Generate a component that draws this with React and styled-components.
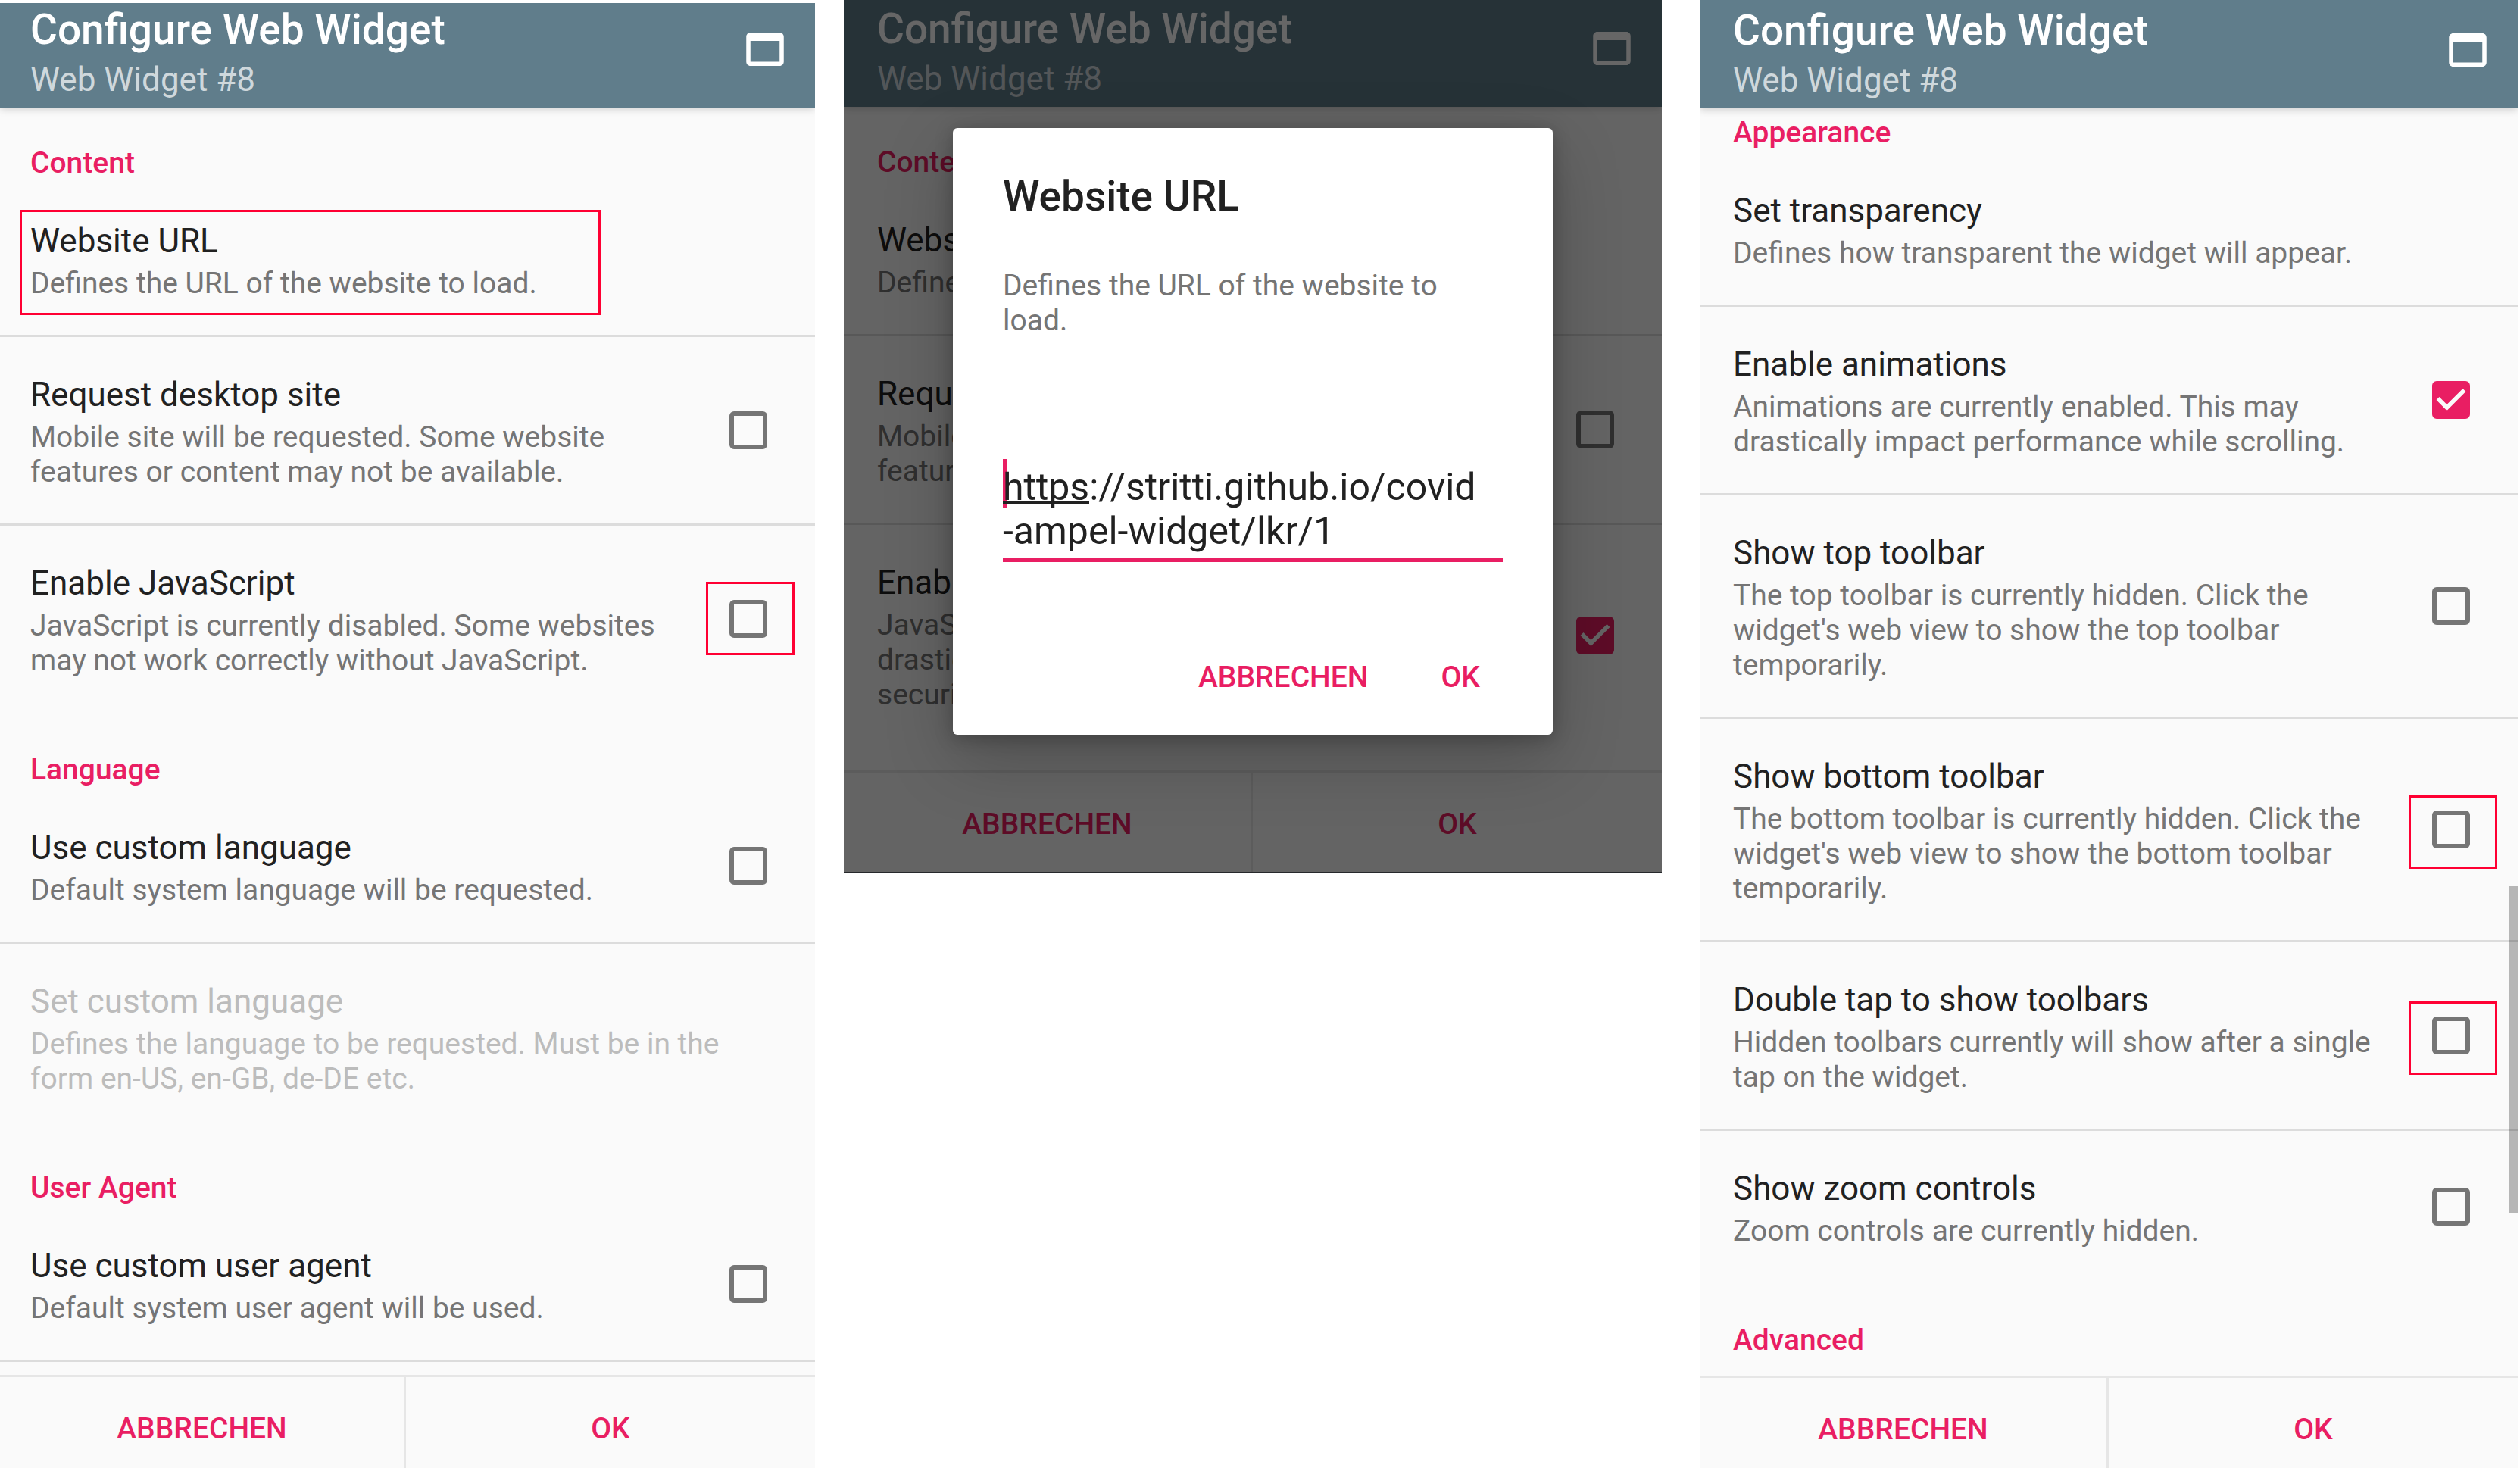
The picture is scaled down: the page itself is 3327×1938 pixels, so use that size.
import React, { useId } from "react";
import styled, { createGlobalStyle, css } from "styled-components";

const color = {
  bar: "#607d8b",
  accent: "#e91e63",
  surface: "#fafafa",
  text: "#212121",
  muted: "#757575",
  disabled: "#bcbcbc",
  divider: "#dcdcdc",
  footerLine: "#e6e6e6",
  marker: "#ff0033",
};

const GlobalStyle = createGlobalStyle`
  * { box-sizing: border-box; }
  body { margin: 0; background: #fff; }
  body, button, input, textarea { font-family: Roboto, "Liberation Sans", sans-serif; }
  h1, h2, p { margin: 0; }
`;

const Page = styled.main`
  display: flex;
  align-items: flex-start;
  height: 100vh;
  padding-right: 3px;
  overflow: hidden;
`;

const Panel = styled.section`
  position: relative;
  display: flex;
  flex-direction: column;
  flex: ${(p) => p.$grow || 1080} 1 0;
  min-width: 0;
  height: ${(p) => (p.$short ? "auto" : "calc(100vh - " + (p.$top || 0) + "px)")};
  margin-top: ${(p) => p.$top || 0}px;
  margin-left: ${(p) => p.$gap || 0}px;
  overflow: hidden;
  background: ${color.surface};
  --edge: ${(p) => p.$edge || 44}px;
`;

const Header = styled.header`
  position: relative;
  z-index: 1;
  display: flex;
  align-items: flex-end;
  justify-content: space-between;
  flex: none;
  height: ${(p) => p.$height}px;
  padding: 0 33px 11px var(--edge);
  background: ${color.bar};
  box-shadow: 0 2px 10px rgba(0, 0, 0, 0.18);
`;

const HeaderText = styled.div`
  display: flex;
  flex-direction: column;
  gap: 8px;
`;

const HeaderTitle = styled.h1`
  color: #fff;
  font-size: 55px;
  font-weight: 500;
  line-height: 64px;
`;

const HeaderSubtitle = styled.p`
  color: #cfd8dc;
  font-size: 44px;
  line-height: 52px;
`;

const HeaderButton = styled.button`
  display: block;
  width: 66px;
  height: 66px;
  margin-bottom: 33px;
  padding: 0;
  border: 0;
  background: none;
  color: #fff;

  svg { display: block; width: 100%; height: 100%; }
`;

const Scroller = styled.div`
  position: relative;
  flex: 1 1 auto;
  min-height: 0;
  padding-bottom: ${(p) => p.$tail || 0}px;
  overflow: hidden;
`;

const List = styled.div`
  margin-top: ${(p) => -(p.$scrolled || 0)}px;
`;

const ScrollThumb = styled.span`
  position: absolute;
  top: 61.4%;
  right: 0;
  width: 11px;
  height: 25.8%;
  background: rgba(0, 0, 0, 0.27);
`;

const Category = styled.h2`
  height: 100px;
  padding: 50px var(--edge) 4px;
  color: ${color.accent};
  font-size: 39px;
  font-weight: 500;
  line-height: 46px;
`;

const rowStyle = css`
  position: relative;
  display: flex;
  align-items: center;
  width: 100%;
  padding: 45px 63px 45px var(--edge);
  border: 0;
  border-bottom: 3px solid ${(p) => (p.$last ? "transparent" : color.divider)};
  border-radius: 0;
  background: none;
  text-align: left;
`;

const CheckRow = styled.label`
  ${rowStyle}
  gap: 48px;
`;

const ActionRow = styled.button`
  ${rowStyle}
  padding-right: 44px;

  &:disabled span { color: ${color.disabled}; }
`;

const RowText = styled.span`
  display: flex;
  flex: 1;
  flex-direction: column;
  gap: 7px;
  min-width: 0;
  padding-top: 5px;
`;

const RowTitle = styled.span`
  color: ${color.text};
  font-size: 44px;
  line-height: 52px;
`;

const RowSummary = styled.span`
  color: ${color.muted};
  font-size: 39px;
  line-height: 46px;
  white-space: pre-line;
`;

const RowMarker = styled.span`
  position: absolute;
  top: 35px;
  left: 26px;
  width: 767px;
  height: 139px;
  border: 3px solid ${color.marker};
`;

const CheckCell = styled.span`
  position: relative;
  flex: none;
  width: 50px;
  height: 50px;
`;

const CheckMarker = styled.span`
  position: absolute;
  inset: ${(p) => -p.$above}px -36px ${(p) => p.$above - 47}px -31px;
  border: 3px solid ${color.marker};
`;

const Box = styled.input`
  display: block;
  width: 50px;
  height: 50px;
  margin: 0;
  border: 6px solid ${color.muted};
  border-radius: 6px;
  appearance: none;

  &:checked {
    border-color: ${color.accent};
    background: ${color.accent};
  }
`;

const Tick = styled.svg`
  position: absolute;
  inset: 0;
  width: 50px;
  height: 50px;
  pointer-events: none;
`;

const Footer = styled.footer`
  display: grid;
  grid-template-columns: ${(p) => p.$split || "1fr 1fr"};
  flex: none;
  height: 136px;
  margin-bottom: ${(p) => -(p.$cut || 0)}px;
  border-top: 3px solid ${color.footerLine};
`;

const textButton = css`
  border: 0;
  background: none;
  color: ${color.accent};
  font-size: 39px;
  font-weight: 500;
  line-height: 46px;
`;

const FooterButton = styled.button`
  ${textButton}
  padding: 2px 0 0;

  &:first-child { border-right: 3px solid ${color.footerLine}; }
`;

const Scrim = styled.div`
  position: absolute;
  z-index: 2;
  inset: 0;
  display: flex;
  align-items: flex-start;
  justify-content: center;
  padding: 169px 144px 0;
  border-bottom: 2px solid #26282b;
  background: rgba(0, 0, 0, 0.6);
`;

const Dialog = styled.div`
  display: flex;
  flex-direction: column;
  width: 100%;
  padding: 58px 66px 40px;
  border-radius: 6px;
  background: #fff;
  box-shadow: 0 30px 90px rgba(0, 0, 0, 0.22), 0 4px 24px rgba(0, 0, 0, 0.24);
`;

const DialogTitle = styled.h2`
  color: ${color.text};
  font-size: 55px;
  font-weight: 500;
  line-height: 64px;
`;

const DialogMessage = styled.label`
  margin-top: 63px;
  color: ${color.muted};
  font-size: 39px;
  line-height: 46px;
`;

const Field = styled.div`
  position: relative;
  margin-top: 168px;
  border-bottom: 6px solid ${color.accent};
`;

const UrlInput = styled.textarea`
  position: relative;
  display: block;
  width: 100%;
  height: 122px;
  padding: 0;
  border: 0;
  outline: 0;
  overflow: hidden;
  resize: none;
  background: none;
  color: ${color.text};
  font-size: 50px;
  line-height: 58px;
`;

const Caret = styled.span`
  position: absolute;
  top: -8px;
  left: 0;
  width: 6px;
  height: 65px;
  background: ${color.accent};
`;

const Composing = styled.span`
  position: absolute;
  top: 48px;
  left: 0;
  width: 114px;
  height: 3px;
  background: ${color.text};
`;

const DialogActions = styled.div`
  display: flex;
  justify-content: flex-end;
  gap: 52px;
  margin-top: 116px;
  padding-right: 8px;
`;

const DialogButton = styled.button`
  ${textButton}
  height: 72px;
  padding: 0 22px;
`;

function WindowIcon() {
  return (
    <svg viewBox="0 0 24 24" fill="currentColor" aria-hidden="true">
      <path d="M19 4H5c-1.11 0-2 .9-2 2v12c0 1.1.89 2 2 2h14c1.1 0 2-.9 2-2V6c0-1.1-.89-2-2-2zm0 14H5V8h14v10z" />
    </svg>
  );
}

function TopBar({ height }) {
  return (
    <Header $height={height}>
      <HeaderText>
        <HeaderTitle>Configure Web Widget</HeaderTitle>
        <HeaderSubtitle>Web Widget #8</HeaderSubtitle>
      </HeaderText>
      <HeaderButton type="button" aria-label="Window">
        <WindowIcon />
      </HeaderButton>
    </Header>
  );
}

function Preference({ title, summary, check, checked, last, marked, markAbove, disabled }) {
  const id = useId();
  const text = (
    <RowText>
      <RowTitle>{title}</RowTitle>
      <RowSummary>{summary}</RowSummary>
    </RowText>
  );
  if (!check) {
    return (
      <ActionRow type="button" disabled={disabled} $last={last}>
        {text}
        {marked && <RowMarker />}
      </ActionRow>
    );
  }
  return (
    <CheckRow htmlFor={id} $last={last}>
      {text}
      <CheckCell>
        <Box id={id} type="checkbox" defaultChecked={checked} />
        {checked && (
          <Tick viewBox="0 0 18 18" aria-hidden="true">
            <path
              d="M7 14L2 9l1.41-1.41L7 11.17l7.59-7.59L16 5z"
              fill={color.surface}
            />
          </Tick>
        )}
        {markAbove && <CheckMarker $above={markAbove} />}
      </CheckCell>
    </CheckRow>
  );
}

function Actions({ cut, split }) {
  return (
    <Footer $cut={cut} $split={split}>
      <FooterButton type="button">ABBRECHEN</FooterButton>
      <FooterButton type="button">OK</FooterButton>
    </Footer>
  );
}

function ContentPanel() {
  return (
    <Panel $grow={1076} $top={4} $edge={40}>
      <TopBar height={138} />
      <Scroller>
        <List>
          <Category>Content</Category>
          <Preference title="Website URL" summary="Defines the URL of the website to load." marked />
          <Preference
            check
            title="Request desktop site"
            summary="Mobile site will be requested. Some website features or content may not be available."
          />
          <Preference
            check
            last
            markAbove={24}
            title="Enable JavaScript"
            summary="JavaScript is currently disabled. Some websites may not work correctly without JavaScript."
          />
          <Category>Language</Category>
          <Preference check title="Use custom language" summary="Default system language will be requested." />
          <Preference
            last
            disabled
            title="Set custom language"
            summary="Defines the language to be requested. Must be in the form en-US, en-GB, de-DE etc."
          />
          <Category>User Agent</Category>
          <Preference check title="Use custom user agent" summary="Default system user agent will be used." />
        </List>
      </Scroller>
      <Actions cut={13} split="536fr 540fr" />
    </Panel>
  );
}

function DialogPanel() {
  return (
    <Panel $gap={38} $short>
      <TopBar height={141} />
      <Scroller $tail={29}>
        <List>
          <Category>Content</Category>
          <Preference title="Website URL" summary="Defines the URL of the website to load." />
          <Preference
            check
            title="Request desktop site"
            summary="Mobile site will be requested. Some website features or content may not be available."
          />
          <Preference
            check
            checked
            last
            title="Enable JavaScript"
            summary={"JavaScript is currently enabled. This may\ndrastically impact performance and\nsecurity."}
          />
        </List>
      </Scroller>
      <Actions />
      <Scrim>
        <Dialog role="dialog" aria-modal="true" aria-labelledby="url-title">
          <DialogTitle id="url-title">Website URL</DialogTitle>
          <DialogMessage htmlFor="url-field">Defines the URL of the website to load.</DialogMessage>
          <Field>
            <Caret />
            <UrlInput
              id="url-field"
              rows={2}
              spellCheck={false}
              defaultValue={"https://stritti.github.io/covid\n-ampel-widget/lkr/1"}
            />
            <Composing />
          </Field>
          <DialogActions>
            <DialogButton type="button">ABBRECHEN</DialogButton>
            <DialogButton type="button">OK</DialogButton>
          </DialogActions>
        </Dialog>
      </Scrim>
    </Panel>
  );
}

function AppearancePanel() {
  return (
    <Panel $gap={50}>
      <TopBar height={143} />
      <Scroller>
        <List $scrolled={41}>
          <Category>Appearance</Category>
          <Preference title="Set transparency" summary="Defines how transparent the widget will appear." />
          <Preference
            check
            checked
            title="Enable animations"
            summary="Animations are currently enabled. This may drastically impact performance while scrolling."
          />
          <Preference
            check
            title="Show top toolbar"
            summary="The top toolbar is currently hidden. Click the widget's web view to show the top toolbar temporarily."
          />
          <Preference
            check
            markAbove={20}
            title="Show bottom toolbar"
            summary="The bottom toolbar is currently hidden. Click the widget's web view to show the bottom toolbar temporarily."
          />
          <Preference
            check
            markAbove={20}
            title="Double tap to show toolbars"
            summary="Hidden toolbars currently will show after a single tap on the widget."
          />
          <Preference check last title="Show zoom controls" summary="Zoom controls are currently hidden." />
          <Category>Advanced</Category>
        </List>
        <ScrollThumb />
      </Scroller>
      <Actions cut={14} />
    </Panel>
  );
}

export default function App() {
  return (
    <>
      <GlobalStyle />
      <Page>
        <ContentPanel />
        <DialogPanel />
        <AppearancePanel />
      </Page>
    </>
  );
}
